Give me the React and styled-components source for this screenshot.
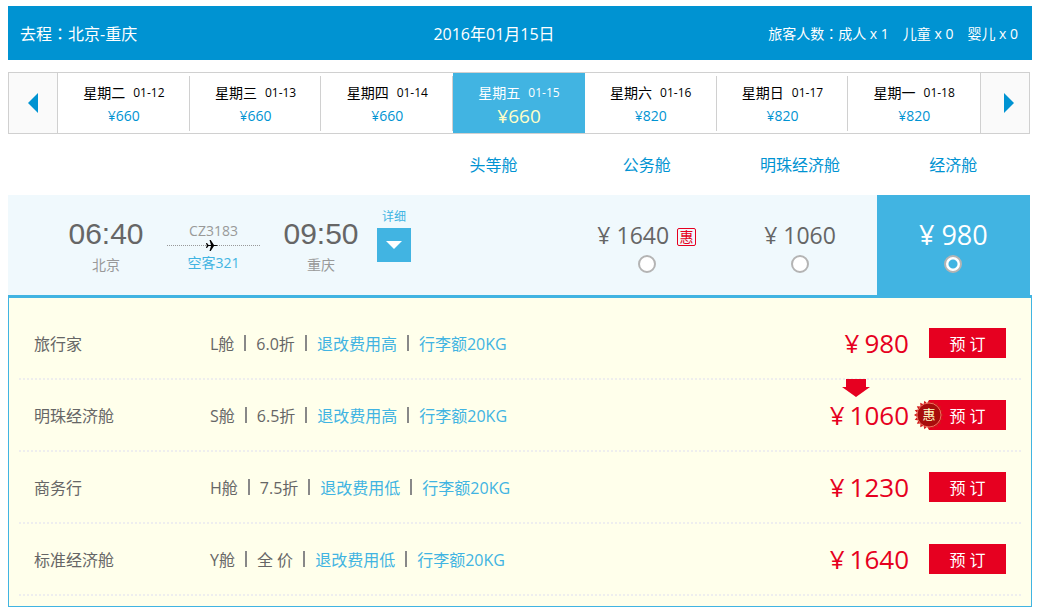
import React, { useState } from 'react';
import styled, { createGlobalStyle } from 'styled-components';

const GlobalStyle = createGlobalStyle`
    body {
        margin: 0;
        padding: 6px 6px 6px 8px;
        background: #fff;
        font-family: 'Open Sans', 'Noto Sans CJK SC', sans-serif;
        font-size: 16px;
        color: #666;
    }
    * {
        box-sizing: border-box;
    }
    button, input {
        font-family: inherit;
        margin: 0;
        padding: 0;
    }
    a {
        color: inherit;
        text-decoration: none;
    }
`;

const Header = styled.header`
    display: grid;
    grid-template-columns: 40% 15% 1fr;
    align-items: center;
    height: 54px;
    padding: 0 14px 0 12px;
    margin-bottom: 12px;
    background: #0093d2;
    color: #fff;
    white-space: nowrap;
`;

const Route = styled.h1`
    margin: 0;
    font-size: 16px;
    font-weight: 400;
`;

const TravelDate = styled.time`
    justify-self: center;
`;

const Travellers = styled.div`
    display: flex;
    justify-content: flex-end;
    gap: 14px;
    font-size: 14px;
`;

// the TC face centres the full-width colon in its box
const Colon = styled.span`
    font-family: 'Noto Sans CJK TC', sans-serif;
    line-height: 1;
`;

const Content = styled.div`
    margin-right: 2px;
`;

const DateBar = styled.nav`
    display: flex;
    height: 62px;
    border: 1px solid #d0d0d0;
`;

const ArrowButton = styled.button`
    display: flex;
    align-items: center;
    justify-content: center;
    width: 49px;
    padding-left: ${({ $next }) => ($next ? '8px' : '0')};
    border: 0 solid #d0d0d0;
    border-width: ${({ $next }) => ($next ? '0 0 0 1px' : '0 1px 0 0')};
    background: #fafafa;
    color: #0093d2;
    cursor: pointer;
`;

const Day = styled.button`
    flex: 1;
    display: flex;
    flex-direction: column;
    align-items: center;
    padding-top: 8px;
    border: 0;
    background: ${({ $active }) => ($active ? '#41b4e2' : 'linear-gradient(#d0d0d0, #d0d0d0) right 3px / 1px 55px no-repeat')};
    color: ${({ $active }) => ($active ? '#fff' : '#000')};
    cursor: pointer;

    &:nth-last-child(2) {
        background-image: none;
    }
`;

const DayName = styled.span`
    display: flex;
    align-items: center;
    gap: 8px;
    font-size: 14px;
    line-height: 24px;
`;

const DayDate = styled.span`
    font-size: 12px;
`;

const DayPrice = styled.span`
    font-size: ${({ $active }) => ($active ? '19px' : '14px')};
    line-height: 22px;
    color: ${({ $active }) => ($active ? '#ffffc8' : '#0093d2')};
`;

const CabinGrid = styled.div`
    display: grid;
    grid-template-columns: 40% repeat(4, 15%);
`;

const CabinHead = styled(CabinGrid)`
    height: 61px;
    padding-bottom: 2px;
    align-items: center;
    color: #0093d2;
    text-align: center;

    span:first-child {
        grid-column: 2;
    }
`;

const FlightRow = styled(CabinGrid)`
    height: 100px;
    background: #f0f9fd;
`;

const FlightInfo = styled.div`
    display: flex;
    align-items: flex-start;
    padding-left: 60px;
`;

const Stop = styled.div`
    width: 76px;
    padding-top: 20px;
    text-align: center;
    font-size: 14px;
    line-height: 24px;
    color: #999;
`;

const Time = styled.div`
    font-family: 'Liberation Sans', sans-serif;
    font-size: 30px;
    line-height: 38px;
    color: #666;
`;

const Plane = styled.div`
    width: 93px;
    margin: 24px 23px 0;
    text-align: center;
    font-size: 14px;
    line-height: 24px;
    color: #999;

    a {
        color: #41b4e2;
    }
`;

const PlaneLine = styled.div`
    display: flex;
    justify-content: center;
    height: 8px;
    background: repeating-linear-gradient(90deg, #999 0 1px, transparent 1px 2px) 0 2px / 100% 1px no-repeat;

    svg {
        margin-top: -3px;
        margin-right: 4px;
    }
`;

const Details = styled.button`
    display: flex;
    flex-direction: column;
    align-items: center;
    gap: 2px;
    width: 34px;
    margin: 12px 0 0 18px;
    border: 0;
    background: none;
    font-size: 12px;
    line-height: 19px;
    color: #41b4e2;
    cursor: pointer;
`;

const DetailsIcon = styled.span`
    display: flex;
    align-items: center;
    justify-content: center;
    width: 34px;
    height: 34px;
    background: #41b4e2;
    color: #fff;
`;

const Fare = styled.label`
    display: flex;
    flex-direction: column;
    align-items: center;
    padding-top: 20px;
    background: ${({ $active }) => ($active ? '#41b4e2' : 'none')};
    color: ${({ $active }) => ($active ? '#fff' : '#666')};
    cursor: pointer;
`;

const FarePrice = styled.span`
    display: flex;
    align-items: center;
    gap: 8px;
    font-size: ${({ $active }) => ($active ? '27px' : '23px')};
    line-height: 40px;
`;

const Tag = styled.span`
    width: 19px;
    height: 18px;
    margin-top: 4px;
    border: 1px solid #e60020;
    border-radius: 2px;
    font-size: 14px;
    line-height: 16px;
    text-align: center;
    color: #e60020;
`;

const Radio = styled.input`
    appearance: none;
    width: 18px;
    height: 18px;
    border: 2px solid #b4b4b4;
    border-radius: 50%;
    background: #fff;

    &:checked {
        background: radial-gradient(circle, #41b4e2 0 4px, #fff 5px);
    }
`;

const Offers = styled.section`
    padding: 10px;
    border: 1px solid #41b4e2;
    border-top-width: 3px;
    background: #ffffeb;
`;

const Offer = styled.div`
    display: flex;
    align-items: center;
    height: 72px;
    padding: 0 15px;
    border-bottom: 2px dotted #eee;
`;

const OfferName = styled.div`
    width: 176px;
`;

const Rules = styled.div`
    display: flex;
    flex: 1;
    align-items: center;

    > * + * {
        display: flex;
        align-items: center;
    }

    > * + *::before {
        content: '';
        width: 2px;
        height: 16px;
        margin: 0 10px;
        background: #888;
    }
`;

const Rule = styled.a`
    color: #41b4e2;
`;

const OfferPrice = styled.div`
    position: relative;
    display: flex;
    gap: 5px;
    margin-right: 20px;
    font-size: 26px;
    line-height: 36px;
    color: #e60020;
`;

const DownArrow = styled.svg`
    position: absolute;
    left: 12px;
    top: -18px;
`;

const BookButton = styled.button`
    position: relative;
    width: 77px;
    height: 30px;
    border: 0;
    background: #e60020;
    font-size: 16px;
    color: #fff;
    cursor: pointer;
`;

const Seal = styled.span`
    position: absolute;
    left: -15px;
    top: 0;
    display: flex;
    align-items: center;
    justify-content: center;
    width: 30px;
    height: 30px;
    padding-bottom: 4px;
    font-size: 13px;
    color: #ffffc8;

    svg {
        position: absolute;
        left: 0;
        top: 0;
    }

    span {
        position: relative;
    }
`;

const days = [
    { name: '星期二', date: '01-12', price: 660 },
    { name: '星期三', date: '01-13', price: 660 },
    { name: '星期四', date: '01-14', price: 660 },
    { name: '星期五', date: '01-15', price: 660 },
    { name: '星期六', date: '01-16', price: 820 },
    { name: '星期日', date: '01-17', price: 820 },
    { name: '星期一', date: '01-18', price: 820 },
];

const cabins = [
    { name: '头等舱' },
    { name: '公务舱', price: 1640, sale: true },
    { name: '明珠经济舱', price: 1060 },
    { name: '经济舱', price: 980 },
];

const offers = [
    { name: '旅行家', code: 'L舱', discount: '6.0折', refund: '退改费用高', price: 980 },
    { name: '明珠经济舱', code: 'S舱', discount: '6.5折', refund: '退改费用高', price: 1060, sale: true },
    { name: '商务行', code: 'H舱', discount: '7.5折', refund: '退改费用低', price: 1230 },
    { name: '标准经济舱', code: 'Y舱', discount: '全 价', refund: '退改费用低', price: 1640 },
];

function SealIcon() {
    const points = [];
    for (let i = 0; i < 40; i++) {
        const r = i % 2 ? 12 : 15;
        const a = (i * Math.PI) / 20;
        points.push(`${(15 + r * Math.cos(a)).toFixed(2)},${(15 + r * Math.sin(a)).toFixed(2)}`);
    }
    return (
        <svg width="30" height="30" viewBox="0 0 30 30">
            <polygon points={points.join(' ')} fill="#d01a1a" />
            <circle cx="15" cy="15" r="12" fill="#a80c0c" stroke="#f07060" />
        </svg>
    );
}

function App() {
    const [day, setDay] = useState('01-15');
    const [cabin, setCabin] = useState('经济舱');

    return (
        <>
            <GlobalStyle />
            <Header>
                <Route>去程<Colon>：</Colon>北京-重庆</Route>
                <TravelDate dateTime="2016-01-15">2016年01月15日</TravelDate>
                <Travellers>
                    <span>旅客人数<Colon>：</Colon>成人 x 1</span>
                    <span>儿童 x 0</span>
                    <span>婴儿 x 0</span>
                </Travellers>
            </Header>
            <Content>
                <DateBar>
                    <ArrowButton aria-label="前一天">
                        <svg width="10" height="20" viewBox="0 0 10 20"><path d="M10 0v20L0 10z" fill="currentColor" /></svg>
                    </ArrowButton>
                    {days.map((el) => (
                        <Day key={el.date} $active={el.date === day} onClick={() => setDay(el.date)}>
                            <DayName>{el.name}<DayDate>{el.date}</DayDate></DayName>
                            <DayPrice $active={el.date === day}>¥{el.price}</DayPrice>
                        </Day>
                    ))}
                    <ArrowButton $next aria-label="后一天">
                        <svg width="10" height="20" viewBox="0 0 10 20"><path d="M0 0v20l10-10z" fill="currentColor" /></svg>
                    </ArrowButton>
                </DateBar>
                <CabinHead>
                    {cabins.map((el) => <span key={el.name}>{el.name}</span>)}
                </CabinHead>
                <FlightRow>
                    <FlightInfo>
                        <Stop><Time>06:40</Time>北京</Stop>
                        <Plane>
                            CZ3183
                            <PlaneLine>
                                <svg width="12" height="11" viewBox="0 0 12 11">
                                    <path d="M0 3h1l1.500 2H5L3.500 0h1.200L8 5h2.500l1.500.5-1.500.5H8l-3.300 5H3.500L5 6H2.500L1 8H0l.8-2.500z" fill="#000" />
                                </svg>
                            </PlaneLine>
                            <a href="#">空客321</a>
                        </Plane>
                        <Stop><Time>09:50</Time>重庆</Stop>
                        <Details>
                            详细
                            <DetailsIcon>
                                <svg width="16" height="8" viewBox="0 0 16 8"><path d="M0 0h16L8 8z" fill="currentColor" /></svg>
                            </DetailsIcon>
                        </Details>
                    </FlightInfo>
                    {cabins.map((el) => el.price ? (
                        <Fare key={el.name} $active={el.name === cabin}>
                            <FarePrice $active={el.name === cabin}>
                                ¥ {el.price}
                                {el.sale && <Tag>惠</Tag>}
                            </FarePrice>
                            <Radio type="radio" name="cabin" checked={el.name === cabin} onChange={() => setCabin(el.name)} />
                        </Fare>
                    ) : <span key={el.name} />)}
                </FlightRow>
            </Content>
            <Offers>
                {offers.map((el) => (
                    <Offer key={el.code}>
                        <OfferName>{el.name}</OfferName>
                        <Rules>
                            <span>{el.code}</span>
                            <span>{el.discount}</span>
                            <Rule href="#">{el.refund}</Rule>
                            <Rule href="#">行李额20KG</Rule>
                        </Rules>
                        <OfferPrice>
                            {el.sale && (
                                <DownArrow width="28" height="18" viewBox="0 0 28 18">
                                    <path d="M4 0h20v8h4L14 18 0 8h4z" fill="#e60020" />
                                </DownArrow>
                            )}
                            <span>¥</span>
                            <span>{el.price}</span>
                        </OfferPrice>
                        <BookButton>
                            {el.sale && <Seal><SealIcon /><span>惠</span></Seal>}
                            预 订
                        </BookButton>
                    </Offer>
                ))}
            </Offers>
        </>
    );
}

export default App;
